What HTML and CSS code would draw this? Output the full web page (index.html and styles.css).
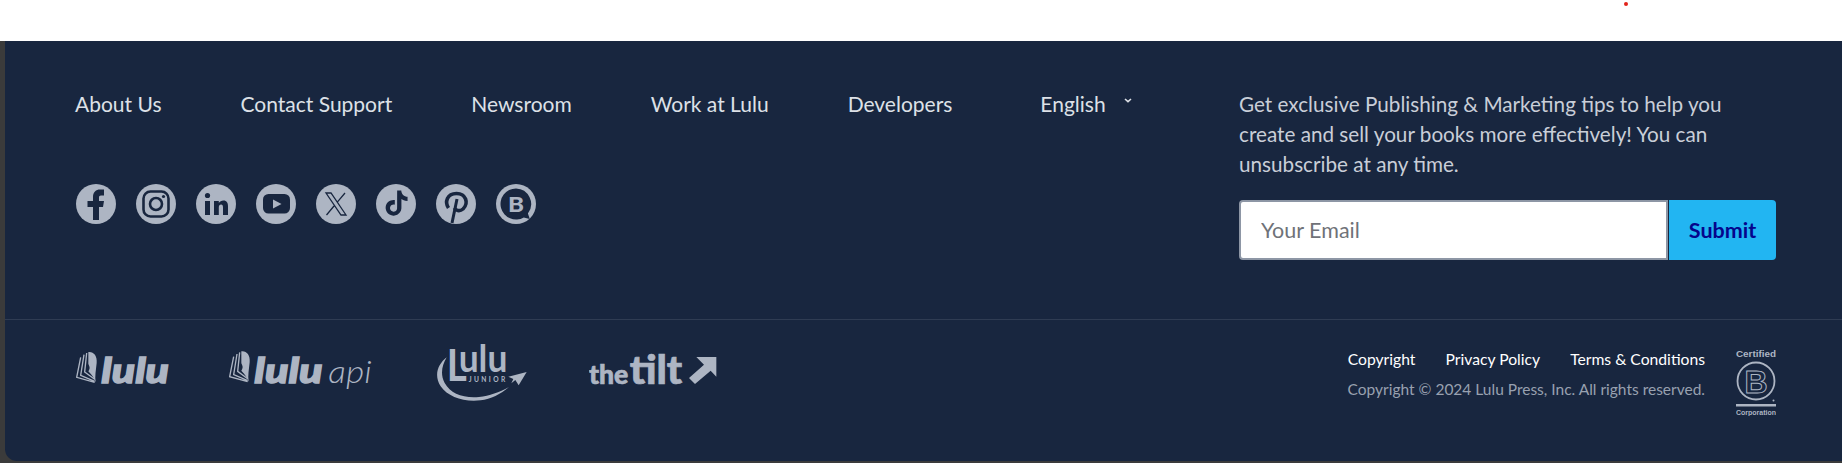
FILE: index.html
```html
<!DOCTYPE html>
<html lang="en">
<head>
<meta charset="utf-8">
<title>Lulu footer</title>
<link rel="stylesheet" href="styles.css">
</head>
<body>
<div class="page-top"><span class="red-dot"></span></div>
<footer class="footer">
  <section class="footer-main">
    <div class="footer-left">
      <nav class="nav">
        <a class="nav-link" href="#">About Us</a>
        <a class="nav-link" href="#">Contact Support</a>
        <a class="nav-link" href="#">Newsroom</a>
        <a class="nav-link" href="#">Work at Lulu</a>
        <a class="nav-link" href="#">Developers</a>
        <a class="nav-link lang" href="#">English
          <svg class="chevron" viewBox="0 0 8 5"><path d="M1 1l3 2.6L7 1" /></svg>
        </a>
      </nav>
      <div class="social">
        <svg class="soc" viewBox="0 0 40 40"><circle class="disc" cx="20" cy="20" r="20"/><path class="ink" d="M17 36V23h-5.500v-6H17v-4c0-5 3-7.500 7-7.500h4v6h-3c-1.500 0-2 .7-2 2V17h5l-1 6h-4v13z"/></svg>
        <svg class="soc" viewBox="0 0 40 40"><circle class="disc" cx="20" cy="20" r="20"/><rect class="line" x="7.500" y="7.500" width="25" height="25" rx="7"/><circle class="line" cx="20" cy="20" r="6"/><circle class="ink" cx="27.500" cy="12.500" r="1.600"/></svg>
        <svg class="soc" viewBox="0 0 40 40"><circle class="disc" cx="20" cy="20" r="20"/><circle class="ink" cx="11.500" cy="11.500" r="2.600"/><path class="ink" d="M9 17h5v14H9zM18 17h4.800v2c1-1.500 2.600-2.400 4.600-2.400 3.500 0 4.600 2.400 4.600 5.800V31h-5v-7.600c0-1.700-.5-2.800-1.900-2.800-1.500 0-2.300 1.100-2.300 2.800V31H18z"/></svg>
        <svg class="soc" viewBox="0 0 40 40"><circle class="disc" cx="20" cy="20" r="20"/><rect class="ink" x="7" y="10" width="27" height="19.500" rx="5.500"/><path class="disc" d="M17 15.500l8.500 4.500-8.500 4.500z"/></svg>
        <svg class="soc" viewBox="0 0 40 40"><circle class="disc" cx="20" cy="20" r="20"/><path class="thin" d="M10 9h5l15 22h-5zM29 9l-7.500 8.800M18 22l-7.500 9"/></svg>
        <svg class="soc" viewBox="0 0 40 40"><circle class="disc" cx="20" cy="20" r="20"/><path class="ink" transform="translate(8 6.500) scale(1.050)" d="M12.525.02c1.310-.02 2.610-.01 3.910-.02.08 1.530.63 3.090 1.750 4.170 1.120 1.110 2.700 1.620 4.240 1.790v4.030c-1.440-.05-2.890-.35-4.200-.97-.57-.26-1.100-.59-1.620-.93-.01 2.920.01 5.840-.02 8.750-.08 1.400-.54 2.790-1.350 3.940-1.310 1.920-3.580 3.170-5.910 3.210-1.430.08-2.860-.31-4.080-1.030-2.020-1.190-3.440-3.370-3.650-5.710-.02-.5-.03-1-.01-1.490.18-1.900 1.120-3.720 2.580-4.960 1.660-1.440 3.980-2.130 6.150-1.720.02 1.480-.04 2.960-.04 4.440-.99-.32-2.150-.23-3.020.37-.63.41-1.110 1.040-1.360 1.750-.21.51-.15 1.070-.14 1.610.24 1.640 1.820 3.020 3.500 2.870 1.120-.01 2.190-.66 2.770-1.610.19-.33.4-.67.41-1.060.1-1.790.06-3.570.07-5.360.01-4.030-.01-8.050.02-12.070z"/></svg>
        <svg class="soc" viewBox="0 0 40 40"><circle class="disc" cx="20" cy="20" r="20"/><path class="pin" d="M12.500 24C8.500 18 11 9.500 20.500 9.500 30 9.500 33 19 27 25c-3.500 3-7.500 1.500-8.500-1"/><path class="pin-stem" d="M21 15l-5 24"/></svg>
        <svg class="soc" viewBox="0 0 40 40"><circle class="disc" cx="20" cy="20" r="20"/><path class="ink" d="M20 4.500a15.500 15.500 0 1 0 7.800 28.900l6 1.600-1.900-5.600A15.500 15.500 0 0 0 20 4.500z"/><text class="blog-b" x="12" y="27.500" textLength="16" lengthAdjust="spacingAndGlyphs">B</text></svg>
      </div>
    </div>
    <div class="signup">
      <p class="signup-text">Get exclusive Publishing &amp; Marketing tips to help you create and sell your books more effectively! You can unsubscribe at any time.</p>
      <form class="signup-form">
        <input class="email" type="text" placeholder="Your Email">
        <button class="submit" type="button">Submit</button>
      </form>
    </div>
  </section>
  <section class="footer-bottom">
    <div class="logos">
      <svg class="logo logo-lulu" viewBox="48 28 279 174">
        <path class="logo-fill" d="M85 52C100 50 112 62 110 85 108 105 104 125 107 143 100 125 92 118 85 110 92 100 88 95 85 88z"/>
        <path class="logo-stroke" d="M62 68L50 128 104 143M72 60L62 122 104 140M80 55L74 112 104 134"/>
        <text class="lulu-word" x="124" y="146" font-size="105" textLength="203" lengthAdjust="spacingAndGlyphs">lulu</text>
      </svg>
      <svg class="logo logo-api" viewBox="508 28 441 174">
        <path class="logo-fill" d="M545 50C560 48 572 60 570 83 568 103 564 123 567 141 560 123 552 116 545 108 552 98 548 93 545 86z"/>
        <path class="logo-stroke" d="M522 66L510 126 564 141M532 58L522 120 564 138M540 53L534 110 564 132"/>
        <text class="lulu-word" x="584" y="144" font-size="105" textLength="205" lengthAdjust="spacingAndGlyphs">lulu</text>
        <text class="api-word" x="806" y="145" font-size="92" textLength="130" lengthAdjust="spacingAndGlyphs">api</text>
      </svg>
      <svg class="logo logo-junior" viewBox="78 28 279 174">
        <path class="logo-fill" d="M110 68C85 88 70 120 92 155c22 32 70 48 120 42 30-4 60-18 85-40-30 16-58 27-90 30-48 4-85-10-103-42-14-28-8-52 6-77z"/>
        <text class="junior-l" x="110" y="138" font-size="134" textLength="60" lengthAdjust="spacingAndGlyphs">L</text>
        <text class="junior-ulu" x="146" y="112" font-size="112" textLength="146" lengthAdjust="spacingAndGlyphs">ulu</text>
        <text class="junior-sub" x="176" y="141" font-size="20" textLength="110">JUNIOR</text>
        <path class="logo-fill" d="M295 126L350 112 326 152 316 136 304 146 310 133z"/>
      </svg>
      <svg class="logo logo-tilt" viewBox="538 28 387 174">
        <text class="tilt-the" x="538" y="147" font-size="78" textLength="118" lengthAdjust="spacingAndGlyphs">the</text>
        <text class="tilt-word" x="660" y="147" font-size="120" textLength="158" lengthAdjust="spacingAndGlyphs">tilt</text>
        <path class="logo-fill" d="M860 67H920V126L903 108 856 148 838 130 883 90z"/>
      </svg>
    </div>
    <div class="legal-wrap">
      <div class="legal">
        <div class="legal-links">
          <a class="legal-link" href="#">Copyright</a>
          <a class="legal-link" href="#">Privacy Policy</a>
          <a class="legal-link" href="#">Terms &amp; Conditions</a>
        </div>
        <p class="copyright">Copyright © 2024 Lulu Press, Inc. All rights reserved.</p>
      </div>
      <svg class="bcorp" viewBox="0 0 40 66">
        <text class="bc-top" x="20" y="6.800" text-anchor="middle" textLength="40" lengthAdjust="spacingAndGlyphs">Certified</text>
        <circle class="bc-ring" cx="20" cy="31" r="18.500"/>
        <text class="bc-b" x="20" y="42.500" text-anchor="middle">B</text>
        <circle class="bc-mark" cx="37.500" cy="50.500" r="1"/>
        <rect class="bc-mark" x="0" y="54" width="40" height="2.500"/>
        <text class="bc-bottom" x="20" y="65" text-anchor="middle" textLength="40" lengthAdjust="spacingAndGlyphs">Corporation</text>
      </svg>
    </div>
  </section>
</footer>
</body>
</html>
```

FILE: styles.css
```css
* { box-sizing: border-box; }
html, body { margin: 0; height: 463px; overflow: hidden; }
body {
  background: #3b3b3b;
  font-family: "Lato", "Liberation Sans", sans-serif;
}
a { text-decoration: none; color: inherit; }

.page-top { height: 41px; background: #fff; position: relative; }
.red-dot {
  position: absolute; left: 1624px; top: 2px;
  width: 4px; height: 4px; border-radius: 50%; background: #e2231a;
}

.footer {
  margin-left: 5px; height: 420px;
  background: #18263f;
  border-bottom-left-radius: 12px;
}
.footer-main {
  display: flex; justify-content: space-between;
  height: 279px;
  padding: 48px 66px 0 71px;
  border-bottom: 1px solid #2f3c53;
}
.nav { display: flex; gap: 79px; height: 30px; align-items: center; margin-left: -1px; }
.nav-link { font-size: 21px; line-height: 30px; color: #dde1e7; white-space: nowrap; }
.lang { display: flex; align-items: flex-start; gap: 18px; margin-left: 9px; }
.chevron { width: 8px; height: 5px; margin-top: 9px; fill: none; stroke: #dde1e7; stroke-width: 1.6; }

.social { display: flex; gap: 20px; margin-top: 65px; }
.soc { width: 40px; height: 40px; display: block; }
.disc { fill: #adb5c3; }
.ink { fill: #18263f; }
.line { fill: none; stroke: #18263f; stroke-width: 2.6; }
.thin { fill: none; stroke: #18263f; stroke-width: 1.3; }
.pin { fill: none; stroke: #18263f; stroke-width: 3.6; }
.pin-stem { fill: none; stroke: #18263f; stroke-width: 3; }
.blog-b { fill: #adb5c3; font-size: 21px; font-weight: 900; }

.signup { width: 537px; }
.signup-text { margin: 0; font-size: 20.700px; line-height: 30px; color: #c9ced8; font-weight: 400; }
.signup-form { display: flex; margin-top: 21px; height: 60px; gap: 1px; }
.email {
  flex: 1; min-width: 0; height: 60px; padding: 0 20px;
  border: 2px solid #8d96a5; border-radius: 4px 0 0 4px;
  background: #fff; font: 21.500px "Lato", sans-serif; color: #6f7278;
}
.email::placeholder { color: #6f7278; opacity: 1; }
.submit {
  width: 107px; height: 60px; border: 0; padding: 0;
  border-radius: 0 4px 4px 0;
  background: #22b5f2; color: #05058c;
  font: 700 21.500px "Lato", sans-serif;
}

.footer-bottom {
  display: flex; justify-content: space-between; align-items: flex-start;
  padding: 24px 66px 0 71px;
}
.logos { display: flex; gap: 60px; }
.logo { height: 58px; display: block; }
.logo-lulu { width: 93px; }
.logo-api { width: 147px; }
.logo-junior { width: 93px; }
.logo-tilt { width: 129px; }
.logo-fill { fill: #adb5c3; }
.logo-stroke { fill: none; stroke: #adb5c3; stroke-width: 4; }
.lulu-word { fill: #adb5c3; stroke: #adb5c3; stroke-width: 4; font-weight: 900; font-style: italic; }
.api-word { fill: #adb5c3; font-weight: 300; font-style: italic; }
.junior-l, .junior-ulu { fill: #adb5c3; font-weight: 700; }
.junior-sub { fill: #adb5c3; font-weight: 700; }
.tilt-the, .tilt-word { fill: #adb5c3; stroke: #adb5c3; stroke-width: 2; font-weight: 900; }

.legal-wrap { display: flex; gap: 31px; align-items: flex-start; margin-top: 4px; }
.legal { display: flex; flex-direction: column; align-items: flex-end; }
.legal-links { display: flex; gap: 30px; }
.legal-link { font-size: 15.700px; line-height: 22px; color: #fff; white-space: nowrap; }
.copyright { margin: 8px 0 0; font-size: 15.500px; line-height: 22px; color: #98a1b0; white-space: nowrap; }
.bcorp { width: 40px; height: 66px; display: block; margin-top: 2px; }
.bc-top { fill: #adb5c3; font: 700 9px "Liberation Sans", sans-serif; }
.bc-bottom { fill: #adb5c3; font: 700 7.500px "Liberation Sans", sans-serif; }
.bc-ring { fill: none; stroke: #adb5c3; stroke-width: 1.8; }
.bc-b { fill: none; stroke: #adb5c3; stroke-width: 1; font: 700 32px "Liberation Sans", sans-serif; }
.bc-mark { fill: #adb5c3; }
```
